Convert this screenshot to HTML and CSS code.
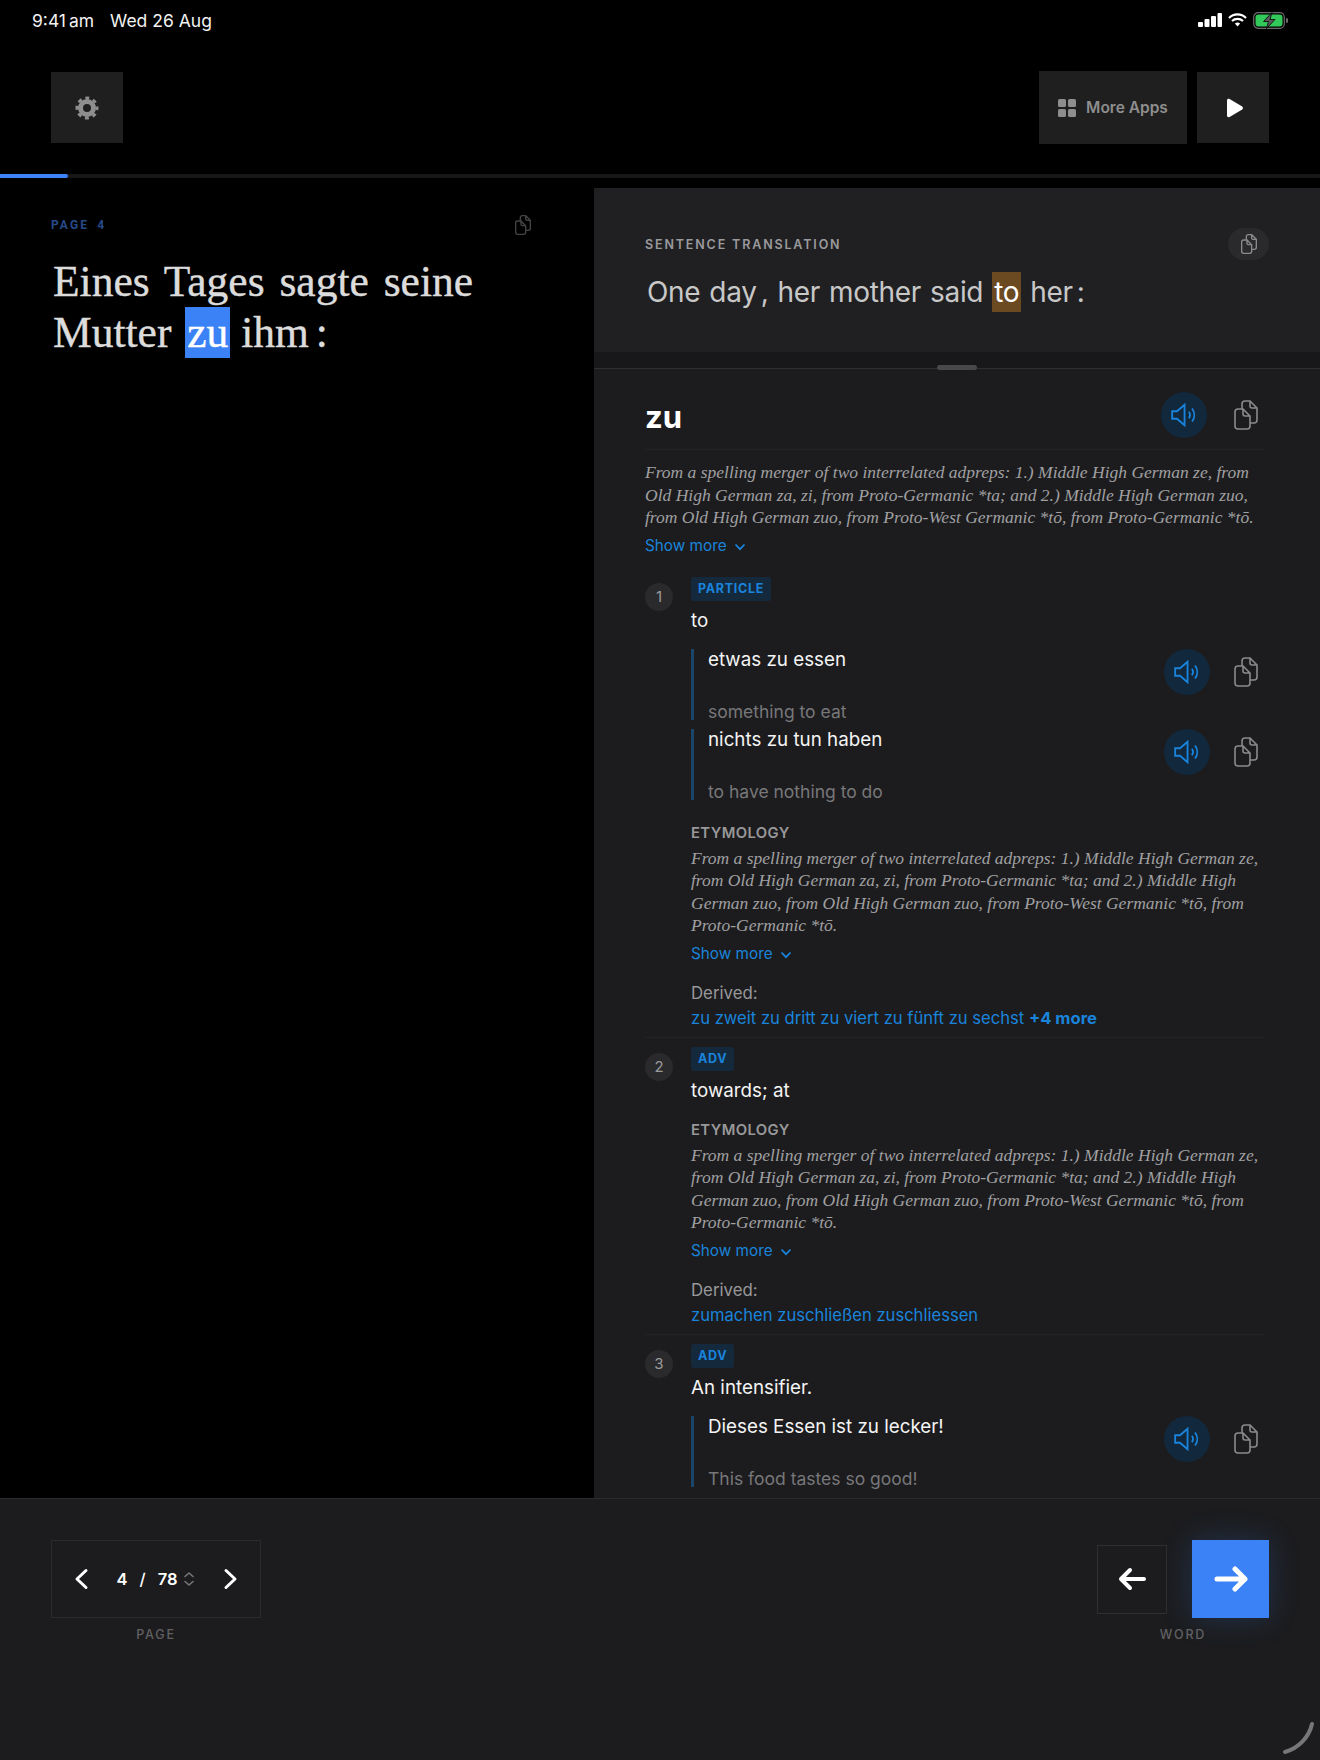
FILE: index.html
```html
<!DOCTYPE html>
<html lang="en">

<head>
    <meta charset="UTF-8">
    <title>Reader</title>
    <link rel="stylesheet" href="styles.css">
</head>

<body>
    <svg class="defs" width="0" height="0">
        <symbol id="copy" viewBox="0 0 24 30">
            <path d="M1 12a3 3 0 0 1 3-3h5l7 7v10a3 3 0 0 1-3 3H4a3 3 0 0 1-3-3zM9 9v5a2 2 0 0 0 2 2h5" />
            <path d="M8 9V4a3 3 0 0 1 3-3h5l7 7v12a3 3 0 0 1-3 3h-4M16 1v5a2 2 0 0 0 2 2h5" />
        </symbol>
        <symbol id="speaker" viewBox="0 0 26 26">
            <path d="M2 9.5v7h4.5l7 6V3.5l-7 6z" />
            <path d="M17.5 10a5 5 0 0 1 0 6M20.5 7a10 10 0 0 1 0 12" />
        </symbol>
        <symbol id="chev" viewBox="0 0 12 8">
            <path d="M1.5 1.5L6 6.2l4.5-4.7" />
        </symbol>
    </svg>

    <div class="status">
        <div class="status-time"><span class="clock">9:41 am</span><span>Wed 26 Aug</span></div>
        <div class="status-icons">
            <svg width="24" height="14" viewBox="0 0 24 14" fill="#fff">
                <rect x="0" y="9" width="5" height="5" rx="1" />
                <rect x="6.5" y="6" width="5" height="8" rx="1" />
                <rect x="13" y="3" width="5" height="11" rx="1" />
                <rect x="19.5" y="0" width="4.5" height="14" rx="1" />
            </svg>
            <svg width="19" height="14" viewBox="0 0 19 14" fill="none" stroke="#fff" stroke-width="2.2">
                <path d="M1 5a12 12 0 0 1 17 0M4 8a8 8 0 0 1 11 0" />
                <path d="M9.5 13.5l-2.6-3a4 4 0 0 1 5.2 0z" fill="#fff" stroke="none" />
            </svg>
            <svg width="35" height="17" viewBox="0 0 35 17">
                <rect x="0.7" y="0.7" width="30.6" height="15.6" rx="4.5" fill="none" stroke="#6a6a6a" stroke-width="1.2" />
                <rect x="2.5" y="2.5" width="27" height="12" rx="3" fill="#32c85a" />
                <path d="M33 6v5a2.5 2.5 0 0 0 0-5z" fill="#6a6a6a" />
                <path d="M19 0.5L10.5 9.5h5L13.5 16.5 22 7.5h-5z" fill="#5a5a5a" stroke="#000" stroke-width="0.8" />
            </svg>
        </div>
    </div>

    <header class="toolbar">
        <button class="tool square">
            <svg width="24" height="24" viewBox="0 0 24 24" fill="none" stroke="#8e8e8e">
                <circle cx="12" cy="12" r="6.5" stroke-width="5" />
                <circle cx="12" cy="12" r="10" stroke-width="3" stroke-dasharray="3.93 3.92" stroke-dashoffset="1.96" />
            </svg>
        </button>
        <div class="tool-right">
            <button class="tool apps">
                <svg width="18" height="18" viewBox="0 0 18 18" fill="#8e8e8e">
                    <rect width="8" height="8" rx="1.5" />
                    <rect x="10" width="8" height="8" rx="1.5" />
                    <rect y="10" width="8" height="8" rx="1.5" />
                    <rect x="10" y="10" width="8" height="8" rx="1.5" />
                </svg>
                More Apps
            </button>
            <button class="tool square play">
                <svg width="18" height="20" viewBox="0 0 18 20" fill="#fff">
                    <path d="M1 2.5C1 1 2.4.4 3.6 1.1l12.6 7.4c1 .6 1 2.4 0 3L3.6 18.9C2.4 19.6 1 19 1 17.5z" />
                </svg>
            </button>
        </div>
    </header>

    <div class="progress"><div class="progress-fill"></div></div>

    <main class="reader">
        <section class="source">
            <div class="source-top">
                <span class="page-label">PAGE 4</span>
                <svg class="ic-copy dim"><use href="#copy" /></svg>
            </div>
            <p class="source-text">Eines Tages sagte seine Mutter <span class="word-on">zu</span> ihm<span class="punct">:</span></p>
        </section>

        <section class="panel">
            <div class="sentence">
                <div class="sentence-top">
                    <span class="sentence-label">SENTENCE TRANSLATION</span>
                    <span class="copy-pill"><svg class="ic-copy small"><use href="#copy" /></svg></span>
                </div>
                <p class="sentence-text">One day<span class="punct">,</span> her mother said <span class="word-match">to</span> her<span class="punct">:</span></p>
            </div>
            <div class="grip"><span class="grip-handle"></span></div>

            <div class="dict">
                <div class="head">
                    <h1 class="head-word">zu</h1>
                    <div class="actions head-actions">
                        <span class="sound"><svg class="ic-sound"><use href="#speaker" /></svg></span>
                        <svg class="ic-copy"><use href="#copy" /></svg>
                    </div>
                </div>
                <p class="etym first">From a spelling merger of two interrelated adpreps: 1.) Middle High German ze, from Old High German za, zi, from Proto-Germanic *ta; and 2.) Middle High German zuo, from Old High German zuo, from Proto-West Germanic *tō, from Proto-Germanic *tō.</p>
                <a class="more">Show more <svg class="ic-chev"><use href="#chev" /></svg></a>

                <div class="sense first-sense divided">
                    <span class="num">1</span>
                    <div class="sense-body">
                        <span class="tag">PARTICLE</span>
                        <p class="gloss">to</p>
                        <div class="examples">
                            <div class="example">
                                <div class="example-text">
                                    <span class="ex-de">etwas zu essen</span>
                                    <span class="ex-en">something to eat</span>
                                </div>
                                <div class="actions">
                                    <span class="sound"><svg class="ic-sound"><use href="#speaker" /></svg></span>
                                    <svg class="ic-copy"><use href="#copy" /></svg>
                                </div>
                            </div>
                            <div class="example">
                                <div class="example-text">
                                    <span class="ex-de">nichts zu tun haben</span>
                                    <span class="ex-en">to have nothing to do</span>
                                </div>
                                <div class="actions">
                                    <span class="sound"><svg class="ic-sound"><use href="#speaker" /></svg></span>
                                    <svg class="ic-copy"><use href="#copy" /></svg>
                                </div>
                            </div>
                        </div>
                        <h2 class="etym-label">ETYMOLOGY</h2>
                        <p class="etym">From a spelling merger of two interrelated adpreps: 1.) Middle High German ze, from Old High German za, zi, from Proto-Germanic *ta; and 2.) Middle High German zuo, from Old High German zuo, from Proto-West Germanic *tō, from Proto-Germanic *tō.</p>
                        <a class="more">Show more <svg class="ic-chev"><use href="#chev" /></svg></a>
                        <p class="derived">Derived:</p>
                        <p class="links"><a>zu zweit</a> <a>zu dritt</a> <a>zu viert</a> <a>zu fünft</a> <a>zu sechst</a> <b>+4 more</b></p>
                    </div>
                </div>

                <div class="sense divided">
                    <span class="num">2</span>
                    <div class="sense-body">
                        <span class="tag">ADV</span>
                        <p class="gloss">towards; at</p>
                        <h2 class="etym-label">ETYMOLOGY</h2>
                        <p class="etym">From a spelling merger of two interrelated adpreps: 1.) Middle High German ze, from Old High German za, zi, from Proto-Germanic *ta; and 2.) Middle High German zuo, from Old High German zuo, from Proto-West Germanic *tō, from Proto-Germanic *tō.</p>
                        <a class="more">Show more <svg class="ic-chev"><use href="#chev" /></svg></a>
                        <p class="derived">Derived:</p>
                        <p class="links"><a>zumachen</a> <a>zuschließen</a> <a>zuschliessen</a></p>
                    </div>
                </div>

                <div class="sense">
                    <span class="num">3</span>
                    <div class="sense-body">
                        <span class="tag">ADV</span>
                        <p class="gloss">An intensifier.</p>
                        <div class="examples">
                            <div class="example">
                                <div class="example-text">
                                    <span class="ex-de">Dieses Essen ist zu lecker!</span>
                                    <span class="ex-en">This food tastes so good!</span>
                                </div>
                                <div class="actions">
                                    <span class="sound"><svg class="ic-sound"><use href="#speaker" /></svg></span>
                                    <svg class="ic-copy"><use href="#copy" /></svg>
                                </div>
                            </div>
                        </div>
                    </div>
                </div>
            </div>
        </section>
    </main>

    <footer class="footer">
        <div class="nav-group">
            <div class="pager">
                <svg width="15" height="22" viewBox="0 0 15 22" class="pager-arrow"><path d="M12 2.5L3 11l9 8.5" /></svg>
                <div class="pager-count">
                    <span class="pager-cur">4</span><span class="pager-sep">/</span><span>78</span>
                    <svg width="12" height="16" viewBox="0 0 12 16" class="pager-sort"><path d="M2 5.5L6 2l4 3.5M2 10.5L6 14l4-3.5" /></svg>
                </div>
                <svg width="15" height="22" viewBox="0 0 15 22" class="pager-arrow"><path d="M3 2.5L12 11l-9 8.5" /></svg>
            </div>
            <span class="nav-label">PAGE</span>
        </div>
        <div class="nav-group">
            <div class="word-nav">
                <button class="word-btn back">
                    <svg width="28" height="24" viewBox="0 0 28 24" class="arrow"><path d="M26 12H3M12 3l-9 9 9 9" /></svg>
                </button>
                <button class="word-btn next">
                    <svg width="34" height="26" viewBox="0 0 34 26" class="arrow"><path d="M3 13h28M21 3l10 10-10 10" /></svg>
                </button>
            </div>
            <span class="nav-label">WORD</span>
        </div>
        <svg class="corner" width="34" height="34" viewBox="0 0 34 34"><path d="M31 3C28 16 18 27 4 31" /></svg>
    </footer>
</body>

</html>
```

FILE: styles.css
```css
* {
    box-sizing: border-box;
    margin: 0;
    padding: 0;
}

body {
    width: 1320px;
    height: 1760px;
    background: #000;
    color: #fff;
    font-family: Inter, "Liberation Sans", sans-serif;
    display: flex;
    flex-direction: column;
    overflow: hidden;
}

.defs {
    position: absolute;
}

button {
    font-family: inherit;
    border: 0;
}

/* status bar */
.status {
    height: 40px;
    padding: 0 32px;
    display: flex;
    justify-content: space-between;
    align-items: center;
    font-size: 17.5px;
    color: #f2f2f2;
}

.status-time {
    display: flex;
    gap: 16px;
}

.clock {
    word-spacing: -2px;
}

.status-icons {
    display: flex;
    align-items: center;
    gap: 6px;
}

/* top tools */
.toolbar {
    height: 134px;
    padding: 32px 51px 0;
    display: flex;
    justify-content: space-between;
    align-items: flex-start;
}

.tool-right {
    display: flex;
    align-items: flex-start;
    gap: 10px;
}

.tool {
    height: 71px;
    background: #1f1f1f;
    display: flex;
    align-items: center;
    justify-content: center;
}

.square {
    width: 72px;
}

.play {
    padding-left: 4px;
}

.apps {
    width: 148px;
    height: 73px;
    margin-top: -1px;
    gap: 10px;
    color: #8e8e8e;
    font-size: 15.5px;
    font-weight: 600;
}

.progress {
    height: 4px;
    background: #18181a;
}

.progress-fill {
    width: 68px;
    height: 4px;
    background: #3b82f6;
    border-radius: 0 2px 2px 0;
}

/* main area */
.reader {
    height: 1320px;
    display: flex;
}

.source {
    width: 594px;
    padding: 37px 63px 0 51px;
}

.source-top {
    display: flex;
    justify-content: space-between;
    align-items: center;
    height: 20px;
}

.page-label {
    font-family: "Roboto", sans-serif;
    font-size: 12px;
    font-weight: 700;
    letter-spacing: 2.1px;
    word-spacing: 3px;
    color: #274a8a;
}

.source-text {
    margin: 21px 0 0 2px;
    font-family: "Liberation Serif", serif;
    font-size: 43.5px;
    line-height: 51px;
    word-spacing: 4px;
    color: #dcdcdc;
    -webkit-text-stroke: 0.4px #dcdcdc;
}

.source-text .punct {
    margin-left: 7px;
}

.word-on {
    display: inline-block;
    width: 45px;
    height: 51px;
    margin: 0 -4px 0 -1px;
    background: #3b82f6;
    color: #fff;
    text-align: center;
    -webkit-text-stroke: 0.4px #fff;
}

.punct {
    margin-left: 4px;
}

.panel {
    flex: 1;
    margin-top: 10px;
    background: #1c1c1e;
    overflow: hidden;
}

.sentence {
    height: 164px;
    padding: 40px 51px 0;
    background: #202023;
}

.sentence-top {
    display: flex;
    justify-content: space-between;
    align-items: center;
    height: 32px;
}

.sentence-label {
    font-size: 12.5px;
    font-weight: 600;
    letter-spacing: 1.85px;
    color: #9a9a9c;
}

.copy-pill {
    width: 41px;
    height: 32px;
    border-radius: 16px;
    background: #2a2a2d;
    display: flex;
    align-items: center;
    justify-content: center;
}

.sentence-text {
    margin: 12px 0 0 2px;
    font-size: 28px;
    line-height: 40px;
    letter-spacing: -0.3px;
    word-spacing: 1.4px;
    color: #c8c8c8;
}

.word-match {
    display: inline-block;
    width: 29px;
    background: #6b4a22;
    color: #fff;
    text-align: center;
}

.grip {
    position: relative;
    height: 17px;
    background: #18181a;
    border-bottom: 1px solid #2e2e30;
}

.grip-handle {
    position: absolute;
    left: 343px;
    top: 13px;
    width: 40px;
    height: 5px;
    border-radius: 3px;
    background: #48484a;
}

.dict {
    padding: 21px 55px 0 51px;
}

.head {
    display: flex;
    justify-content: space-between;
    align-items: center;
    padding-bottom: 9px;
    border-bottom: 1px solid #232325;
}

.head-word {
    font-size: 31px;
    font-weight: 700;
    line-height: 46px;
    margin-top: 4px;
}

.actions {
    display: flex;
    align-items: center;
    gap: 24px;
    padding-right: 7px;
}

.head-actions {
    gap: 27px;
}

.sound {
    width: 46px;
    height: 46px;
    border-radius: 50%;
    background: #12283c;
    display: flex;
    align-items: center;
    justify-content: center;
}

.ic-sound {
    width: 28px;
    height: 28px;
    fill: none;
    stroke: #1a84dc;
    stroke-width: 1.7;
}

.ic-copy {
    width: 24px;
    height: 30px;
    fill: none;
    stroke: #8a8a8c;
    stroke-width: 1.6;
}

.ic-copy.small {
    width: 16px;
    height: 20px;
    stroke-width: 2;
}

.ic-copy.dim {
    width: 16px;
    height: 20px;
    stroke: #444446;
    stroke-width: 2;
}

.ic-chev {
    width: 12px;
    height: 8px;
    margin-left: 3px;
    fill: none;
    stroke: #1a84dc;
    stroke-width: 1.8;
}

.etym {
    font-family: "Liberation Serif", serif;
    font-style: italic;
    font-size: 17.5px;
    line-height: 22.5px;
    color: #a0a0a2;
}

.etym.first {
    margin-top: 11px;
}

.more {
    display: block;
    margin-top: 6px;
    font-size: 15.3px;
    line-height: 22px;
    color: #1a84dc;
}

.sense {
    display: flex;
    padding-top: 9px;
}

.first-sense {
    padding-top: 20px;
}

.divided {
    padding-bottom: 8px;
    border-bottom: 1px solid #232325;
}

.num {
    width: 28px;
    height: 28px;
    margin: 6px 18px 0 0;
    flex: none;
    border-radius: 50%;
    background: #2a2a2c;
    color: #9a9a9c;
    font-size: 15px;
    line-height: 28px;
    text-align: center;
}

.sense-body {
    flex: 1;
}

.tag {
    display: inline-block;
    height: 24px;
    padding: 0 7px;
    border-radius: 3px;
    background: #15293d;
    color: #1a84dc;
    font-size: 12.5px;
    font-weight: 700;
    letter-spacing: 0.7px;
    line-height: 24px;
    vertical-align: top;
}

.gloss {
    margin-top: 7px;
    font-size: 18.8px;
    line-height: 26px;
    color: #f4f4f4;
}

.examples {
    margin-top: 15px;
    display: flex;
    flex-direction: column;
    gap: 9px;
}

.examples + .etym-label {
    margin-top: 24px;
}

.example {
    height: 71px;
    display: flex;
    justify-content: space-between;
    align-items: flex-start;
    border-left: 3px solid #1a4569;
    padding-left: 14px;
}

.example-text {
    height: 71px;
    display: flex;
    flex-direction: column;
    justify-content: space-between;
}

.ex-de {
    font-size: 18.8px;
    line-height: 22px;
    color: #f4f4f4;
}

.ex-en {
    font-size: 17.5px;
    line-height: 16px;
    color: #77777a;
}

.etym-label {
    margin-top: 17px;
    font-size: 14.8px;
    font-weight: 600;
    line-height: 18px;
    letter-spacing: 0.4px;
    color: #98989a;
}

.etym-label + .etym {
    margin-top: 5px;
}

.derived {
    margin-top: 17px;
    font-size: 16.8px;
    line-height: 22px;
    color: #98989a;
}

.links {
    margin-top: 3px;
    font-size: 16.6px;
    line-height: 22px;
    color: #1a84dc;
}

/* bottom bar */
.footer {
    position: relative;
    flex: 1;
    padding: 41px 51px 0;
    display: flex;
    justify-content: space-between;
    align-items: flex-start;
    background: #1c1c1e;
    border-top: 1px solid #2b2b2d;
}

.nav-group {
    display: flex;
    flex-direction: column;
    align-items: center;
}

.pager {
    width: 210px;
    height: 78px;
    padding: 0 22px;
    display: flex;
    justify-content: space-between;
    align-items: center;
    border: 1px solid #2b2b2d;
}

.pager-arrow,
.arrow,
.pager-sort,
.corner {
    fill: none;
    stroke-linecap: round;
    stroke-linejoin: round;
}

.pager-arrow {
    stroke: #fff;
    stroke-width: 3;
}

.pager-count {
    display: flex;
    align-items: center;
    font-size: 16.5px;
    font-weight: 600;
}

.pager-sep {
    margin: 0 12px;
    font-weight: 500;
}

.pager-sort {
    margin-left: 6px;
    stroke: #77777a;
    stroke-width: 1.6;
}

.nav-label {
    margin-top: 9px;
    font-size: 12.5px;
    font-weight: 500;
    line-height: 16px;
    letter-spacing: 1.8px;
    color: #616163;
}

.word-nav {
    display: flex;
    align-items: center;
    gap: 25px;
    height: 78px;
}

.word-btn {
    display: flex;
    align-items: center;
    justify-content: center;
}

.back {
    width: 70px;
    height: 69px;
    background: none;
    border: 1px solid #2f2f31;
}

.next {
    width: 77px;
    height: 78px;
    background: #3b82f6;
    box-shadow: 0 0 30px rgba(59, 130, 246, 0.22);
}

.arrow {
    stroke: #fff;
    stroke-width: 5;
}

.back .arrow {
    stroke-width: 4;
}

.corner {
    position: absolute;
    right: 5px;
    bottom: 5px;
    stroke: #77777a;
    stroke-width: 4;
}
```
